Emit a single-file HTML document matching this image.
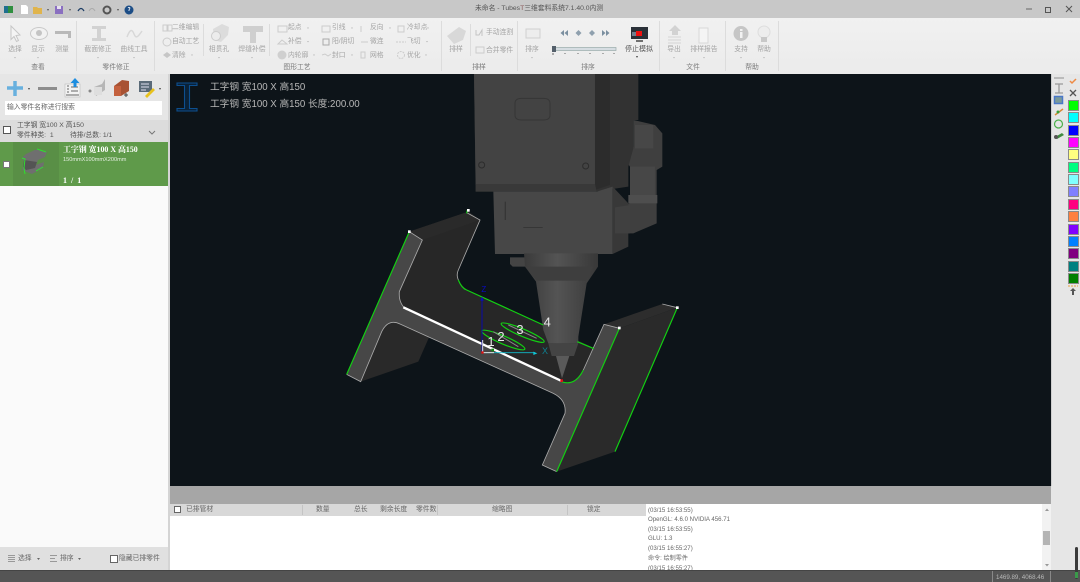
<!DOCTYPE html>
<html><head><meta charset="utf-8">
<style>
html,body{margin:0;padding:0;width:1080px;height:582px;overflow:hidden;background:#ececec}
body{position:relative;font-family:"Liberation Sans","Noto Sans CJK SC",sans-serif;font-size:6.800px;color:#444}
div,span,svg{position:absolute}
svg{overflow:visible;left:0;top:0}
.t{white-space:nowrap;line-height:10px;filter:blur(.25px)}
.c{transform:translateX(-50%)}
.g{color:#a4a4a4}
.l{color:#7c7c7c}
.k{color:#666}
.sep{width:1px;background:#dcdcdc;top:21px;height:50px}
.sw{left:1068px;width:9px;height:9px;border:1px solid #8a8a8a}
</style></head>
<body>
<!-- title bar -->
<div style="left:0;top:0;width:1080px;height:18px;background:#c8c8c8"></div>
<div style="left:0;top:18px;width:1080px;height:56px;background:linear-gradient(#f1f1f1,#ebebeb)"></div>
<span class="t" style="left:475px;top:4px;color:#555">未命名 - Tubes<span style="position:static;color:#8a5a5a">T</span>三维套料系统7.1.40.0内测</span>

<svg width="1080" height="74">
 <!-- qat -->
 <rect x="4" y="6" width="5" height="7" fill="#1f6f8f"/><rect x="8" y="6" width="5" height="7" fill="#2f8f3f"/>
 <path d="M21 5h5l2 2v7h-7z" fill="#fff"/>
 <path d="M33 7h4l1 1h4v6h-9z" fill="#e0b44c"/>
 <path d="M47 9l2 0-1 2z" fill="#555"/>
 <rect x="55" y="6" width="8" height="8" fill="#8a6fc0"/><rect x="57" y="6" width="4" height="3" fill="#e6e0f0"/>
 <path d="M69 9l2 0-1 2z" fill="#555"/>
 <path d="M78 11q3-5 6 0" fill="none" stroke="#1f3f66" stroke-width="1.300"/>
 <path d="M89 11q3-5 6 0" fill="none" stroke="#aaa" stroke-width="1"/>
 <circle cx="107" cy="10" r="3.500" fill="none" stroke="#555" stroke-width="2"/>
 <path d="M117 9l2 0-1 2z" fill="#555"/>
 <circle cx="129" cy="10" r="4.500" fill="#1c4d86"/>
 <path d="M128 8q1-1.500 2 0l-1 2v1" fill="none" stroke="#fff" stroke-width=".8"/>
 <!-- window buttons -->
 <path d="M1026 9h6" stroke="#666"/>
 <rect x="1045.500" y="7.500" width="5" height="5" fill="none" stroke="#555"/>
 <path d="M1066 6l6 6m0-6l-6 6" stroke="#555"/>
 <!-- ribbon icons -->
 <g>
 <path d="M11 26l9 9-4 .5 2.500 5-2 1-2.500-5-3 3z" fill="#f4f4f4" stroke="#c6c6c6"/>
 <ellipse cx="39" cy="33.500" rx="8.500" ry="6" fill="#f2f2f2" stroke="#c9c9c9"/><circle cx="39" cy="33" r="3" fill="#c4c4c4"/>
 <path d="M55 31h16v7h-3v-4h-13z" fill="#b9b9b9"/>
 <path d="M92 26h14v3h-5v9h5v3h-14v-3h5v-9h-5z" fill="#d2d2d2"/>
 <path d="M127 37c3-8 5-8 7-3s4 3 8-3" fill="none" stroke="#d8d8d8" stroke-width="1.500"/>
 <path d="M213 29l9-5 7 3-1 8-7 7-7-2z" fill="#dcdcdc"/>
 <circle cx="216" cy="36" r="4.500" fill="#ececec" stroke="#ccc"/>
 <path d="M243 26h20v6h-7v11h-6v-11h-7z" fill="#cfcfcf"/>
 <rect x="163" y="25" width="4" height="6" fill="none" stroke="#ccc"/><rect x="168" y="25" width="4" height="6" fill="none" stroke="#ccc"/>
 <circle cx="167" cy="42" r="4" fill="none" stroke="#ccc"/>
 <path d="M163 55l4-3 4 3-4 3z" fill="#c6c6c6"/>
 <rect x="278" y="26" width="9" height="6" fill="none" stroke="#ccc"/>
 <path d="M278 44l4-4 5 4z" fill="none" stroke="#ccc"/>
 <circle cx="282" cy="55" r="4.500" fill="#cfcfcf"/>
 <rect x="322" y="26" width="8" height="6" fill="none" stroke="#ccc"/>
 <rect x="323" y="39" width="6" height="6" fill="none" stroke="#aaa"/>
 <path d="M322 55l3-1 3 2 3-2" fill="none" stroke="#ccc"/>
 <path d="M361 26v6M361 42h7M361 52h4v6h-4z" fill="none" stroke="#ccc"/>
 <rect x="398" y="26" width="6" height="6" fill="none" stroke="#ccc"/>
 <path d="M396 42h10" stroke="#ccc" stroke-dasharray="2 1"/>
 <circle cx="401" cy="55" r="3.500" fill="none" stroke="#ccc" stroke-dasharray="2 1"/>
 <path d="M447 36l12-9 7 4-3 9-9 4z" fill="#d8d8d8"/>
 <path d="M476 30v5h3l3-5v6" fill="none" stroke="#c4c4c4"/>
 <rect x="476" y="47" width="8" height="6" fill="none" stroke="#ccc"/>
 <rect x="526" y="29" width="14" height="9" fill="#ededed" stroke="#d0d0d0"/>
 <!-- dropdown arrows -->
 <g fill="#bbb">
 <path d="M14 57h2l-1 1.500zM37 57h2l-1 1.500zM97 57h2l-1 1.500zM133 57h2l-1 1.500zM218 57h2l-1 1.500zM251 57h2l-1 1.500zM531 57h2l-1 1.500zM673 57h2l-1 1.500zM703 57h2l-1 1.500zM740 57h2l-1 1.500zM763 57h2l-1 1.500z"/>
 <path d="M191 54.500h2l-1 1.500zM307 27.500h2l-1 1.500zM307 41h2l-1 1.500zM313 54.500h2l-1 1.500zM351 27.500h2l-1 1.500zM351 54.500h2l-1 1.500zM389 27.500h2l-1 1.500zM427 27.500h2l-1 1.500zM426 41h2l-1 1.500zM425 54.500h2l-1 1.500z"/>
 </g>
 <!-- transport -->
 <path d="M564 30l-3.500 3 3.500 3zM568 30l-3.500 3 3.500 3z" fill="#7b8fa0"/>
 <path d="M578.500 30l3 3-3 3-3-3z" fill="#8fa0ae"/><path d="M592 30l3 3-3 3-3-3z" fill="#8fa0ae"/>
 <path d="M602 30l3.500 3-3.500 3zM606 30l3.500 3-3.500 3z" fill="#7b8fa0"/>
 <rect x="553" y="47.500" width="63" height="3" fill="#d6dde2" stroke="#99aaaa"  stroke-width=".7"/>
 <rect x="552" y="46" width="4" height="6" fill="#54606b"/>
 <path d="M553 53v2M565 53v1M578 53v1M590 53v1M603 53v1M614 53v1" stroke="#666"/>
 <rect x="631" y="27" width="17" height="12" fill="#2a3038"/><rect x="636" y="31" width="6" height="5" fill="#ee1010"/>
 <rect x="632" y="32" width="4" height="4" fill="#6f7f90"/>
 <path d="M636 41h7" stroke="#444" stroke-width="1.500"/>
 <path d="M636 56l2 0-1 2z" fill="#444"/>
 <path d="M675 25l6 6h-3v4h-6v-4h-3z" fill="#d2d2d2"/><path d="M668 37h13M668 40h13M668 43h13" stroke="#d4d4d4"/>
 <path d="M699 28h9v15h-9z" fill="#f4f4f4" stroke="#d8d8d8"/>
 <circle cx="741" cy="33.500" r="7.500" fill="#c6c6c6"/><rect x="740" y="32" width="2.500" height="6" fill="#f2f2f2"/><rect x="740" y="29" width="2.500" height="2" fill="#f2f2f2"/>
 <circle cx="764" cy="32" r="6" fill="#ededed" stroke="#ddd"/><rect x="761" y="37" width="6" height="5" fill="#c8c8c8"/>
 </g>
</svg>
<div class="sep" style="left:76px"></div><div class="sep" style="left:154px"></div>
<div class="sep" style="left:441px"></div><div class="sep" style="left:517px"></div>
<div class="sep" style="left:659px"></div><div class="sep" style="left:725px"></div><div class="sep" style="left:778px"></div>
<div class="sep" style="left:203px;top:24px;height:32px"></div>
<div class="sep" style="left:269px;top:24px;height:32px"></div>
<div class="sep" style="left:470px;top:24px;height:32px"></div>

<span class="t c g" style="left:15px;top:45px">选择</span><span class="t c g" style="left:38px;top:45px">显示</span><span class="t c g" style="left:62px;top:45px">测量</span>
<span class="t c g" style="left:98px;top:45px">截面修正</span><span class="t c g" style="left:134px;top:45px">曲线工具</span>
<span class="t g" style="left:172px;top:23px">二维编辑</span><span class="t g" style="left:172px;top:37px">自动工艺</span><span class="t g" style="left:172px;top:51px">清除</span>
<span class="t c g" style="left:219px;top:45px">相贯孔</span><span class="t c g" style="left:252px;top:45px">焊缝补偿</span>
<span class="t g" style="left:288px;top:23px">起点</span><span class="t g" style="left:288px;top:37px">补偿</span><span class="t g" style="left:288px;top:51px">内轮廓</span>
<span class="t g" style="left:332px;top:23px">引线</span><span class="t g" style="left:332px;top:37px">阳/阴切</span><span class="t g" style="left:332px;top:51px">封口</span>
<span class="t g" style="left:370px;top:23px">反向</span><span class="t g" style="left:370px;top:37px">微连</span><span class="t g" style="left:370px;top:51px">网格</span>
<span class="t g" style="left:407px;top:23px">冷却点</span><span class="t g" style="left:407px;top:37px">飞切</span><span class="t g" style="left:407px;top:51px">优化</span>
<span class="t c g" style="left:456px;top:45px">排样</span>
<span class="t g" style="left:486px;top:28px">手动连割</span><span class="t g" style="left:486px;top:46px">合并零件</span>
<span class="t c g" style="left:532px;top:45px">排序</span>
<span class="t c" style="left:639px;top:45px;color:#555;font-size:7px">停止模拟</span>
<span class="t c g" style="left:674px;top:45px">导出</span><span class="t c g" style="left:704px;top:45px">排样报告</span>
<span class="t c g" style="left:741px;top:45px">支持</span><span class="t c g" style="left:764px;top:45px">帮助</span>
<span class="t c l" style="left:38px;top:63px">查看</span><span class="t c l" style="left:116px;top:63px">零件修正</span><span class="t c l" style="left:297px;top:63px">图形工艺</span>
<span class="t c l" style="left:479px;top:63px">排样</span><span class="t c l" style="left:588px;top:63px">排序</span><span class="t c l" style="left:693px;top:63px">文件</span><span class="t c l" style="left:752px;top:63px">帮助</span>

<!-- left panel -->
<div style="left:0;top:74px;width:168px;height:46px;background:#e6e6e6"></div>
<div style="left:5px;top:101px;width:157px;height:14px;background:#fff"></div>
<span class="t k" style="left:7px;top:103px">输入零件名称进行搜索</span>
<div style="left:0;top:120px;width:168px;height:22px;background:#dcdcdc"></div>
<div style="left:3px;top:126px;width:6px;height:6px;border:1px solid #555;background:#fff"></div>
<span class="t" style="left:17px;top:121px;color:#555">工字钢 宽100 X 高150</span>
<span class="t" style="left:17px;top:131px;color:#555">零件种类:&nbsp; 1</span>
<span class="t" style="left:70px;top:131px;color:#555">待排/总数: 1/1</span>
<div style="left:0;top:142px;width:168px;height:44px;background:#5f9a4a"></div>
<div style="left:13px;top:142px;width:46px;height:44px;background:#598f46"></div>
<div style="left:0;top:186px;width:168px;height:361px;background:#fafafa"></div>
<div style="left:3px;top:161px;width:5px;height:5px;border:1px solid #777;background:#fff"></div>
<span class="t" style="left:63px;top:145px;color:#fff;font-family:'Liberation Serif','Noto Serif CJK SC',serif;font-weight:bold;font-size:7.900px">工字钢 宽100 X 高150</span>
<span class="t" style="left:63px;top:155px;color:#e4efe0;font-size:5.600px">150mmX100mmX200mm</span>
<span class="t" style="left:63px;top:176px;color:#fff;font-family:'Liberation Serif',serif;font-weight:bold;font-size:8px;letter-spacing:1px">1 / 1</span>
<div style="left:0;top:547px;width:168px;height:23px;background:#e0e0e0"></div>
<span class="t k" style="left:18px;top:554px">选择</span><span class="t k" style="left:60px;top:554px">排序</span>
<div style="left:110px;top:555px;width:6px;height:6px;border:1px solid #666;background:#fff"></div>
<span class="t k" style="left:119px;top:554px">隐藏已排零件</span>

<svg width="170" height="582">
 <path d="M8 555.500h7M8 557.500h7M8 559.500h7M8 561.500h7" stroke="#999"/>
 <path d="M37 558h3l-1.500 2zM78 558h3l-1.500 2z" fill="#666"/>
 <path d="M50 555.500h7M50 558.500h5M50 561.500h7" stroke="#999"/>
 <path d="M15 81v15M7 88h16" stroke="#68b0de" stroke-width="3.500"/>
 <path d="M28 88l2 0-1 2z" fill="#444"/>
 <rect x="38" y="87" width="19" height="3" fill="#8d8d8d"/>
 <rect x="65" y="84" width="15" height="13" fill="#f2f2f2" stroke="#bbb" stroke-width=".6"/>
 <path d="M67 86h2M67 89h2M67 92h2M71 87h7M71 91h7M66 95h13" stroke="#666"/>
 <path d="M75 78l4.500 5h-3v4h-3v-4h-3z" fill="#1e8ee0"/>
 <path d="M94 87l8-3 3-5v11l-9 6z" fill="#b6b6b6"/><rect x="94" y="87" width="8" height="8" fill="#dedede"/>
 <circle cx="90" cy="91" r="1.500" fill="#888"/>
 <path d="M114 86l8-6 7 1v10l-8 5h-7z" fill="#a85233"/>
 <path d="M114 86h7v10h-7z" fill="#c4613e"/>
 <path d="M126 93v4m-2-2h4" stroke="#444"/>
 <rect x="139" y="81" width="13" height="11" fill="#5a6a78"/><path d="M141 84h8M141 87h8M141 90h5" stroke="#dde"/>
 <path d="M145 96l8-8 2 2-8 8z" fill="#e8c21e"/>
 <path d="M159 88l2 0-1 2z" fill="#444"/>
 <path d="M149 131l3 3 3-3" fill="none" stroke="#777"/>
 <!-- thumbnail -->
 <path d="M26 154l11-5 10 3-2 5-7 3-2 5 8-3-1 6-11 6-10-4 2-8-2-4z" fill="#6f6f6f"/>
 <path d="M24 160l13 2-2 6-9 2-3-3z" fill="#545454"/>
 <path d="M22 158l3 1-1 9 1 6M37 149l9 3M36 171l7-4" fill="none" stroke="#2fe02f" stroke-width="1"/>
</svg>
<div style="left:168px;top:74px;width:2px;height:496px;background:#d4d4d4"></div>

<!-- viewport -->
<div style="left:170px;top:74px;width:881px;height:412px;background:#0d1419"></div>
<svg width="1080" height="582">
 <defs>
  <linearGradient id="cone" x1="0" x2="1"><stop offset="0" stop-color="#3a3a3a"/><stop offset=".45" stop-color="#545454"/><stop offset="1" stop-color="#383838"/></linearGradient>
 </defs>
 <!-- I icon -->
 <path d="M177 83h20v2.500h-7.500v23h7.500v2.500h-20v-2.500h7.500v-23h-7.500z" fill="#0a2238" stroke="#0d4f8f" stroke-width="1.100"/>

 <!-- I beam (zoom coords) -->
 <g transform="translate(340 200) scale(.33333)">
  <path d="M208 95L385 35L420 60L355 210Q348 245 380 268L765 445L730 510Q705 560 665 545L200 330Q175 310 178 275L247 120Z" fill="#272727"/>
  <path d="M208 95L385 35L420 60L247 120Z" fill="#2a2a2a"/>
  <path d="M62 545L235 485L268 410L170 368Q140 365 125 395Z" fill="#292929"/>
  <path d="M792 373L967 312L1012 323L838 385Z" fill="#2d2d2d"/>
  <path d="M838 385L1012 323L825 755L650 815Z" fill="#2a2a2a"/>
 </g>

 <!-- head -->
 <g transform="translate(460 70) scale(.33333)">
  <path d="M520 150L585 165L607 190V290L590 300L590 460L520 490L465 490V410L510 400V290L495 270L510 245L520 230Z" fill="#3f3f3f"/>
  <path d="M510 290H585V375H510Z" fill="#474747"/>
  <path d="M505 375H592V400H505Z" fill="#4e4e4e"/>
  <path d="M525 165H580V235H525Z" fill="#474747"/>
  <path d="M42 12H535V150L520 150V235L505 290V350L405 365L47 365Z" fill="#323232"/>
  <path d="M405 12H450V345L405 360Z" fill="#2c2c2c"/>
  <path d="M42 12H405V345H47Z" fill="#434343"/>
  <path d="M47 342H405L410 365H47Z" fill="#393939"/>
  <path d="M165 100Q165 85 185 85H250Q270 85 270 100V135Q270 150 250 150H185Q165 150 165 135Z" fill="none" stroke="#363636" stroke-width="3"/>
  <circle cx="65" cy="285" r="9" fill="none" stroke="#2c2c2c" stroke-width="3"/>
  <circle cx="377" cy="288" r="9" fill="none" stroke="#2c2c2c" stroke-width="3"/>
  <path d="M100 365H410L458 350V552H105Z" fill="#474747"/>
  <path d="M458 350L505 400V530L458 552Z" fill="#383838"/>
  <path d="M465 412L510 405V490L465 490Z" fill="#404040"/>
  <path d="M190 472H248" stroke="#2c2c2c" stroke-width="2"/>
  <path d="M136 395V450" stroke="#363636" stroke-width="4"/>
  <path d="M150 562H195V590H158L150 582Z" fill="#444"/>
  <path d="M192 550H414V590L380 640L355 800V820H265L250 780L228 635L195 590Z" fill="url(#cone)"/>
  <path d="M195 590H400L378 632H230Z" fill="#3e3e3e"/>
  <path d="M265 820H355L342 858H275Z" fill="#444"/>
  <path d="M288 858H328L306 925Z" fill="#5a5a5a"/>
 </g>

 <g transform="translate(340 200) scale(.33333)">
  <path d="M208 95L247 120L178 275Q175 310 200 330L665 545Q705 560 730 510L792 373L838 385L650 815L607 795L675 640Q680 600 640 580L180 372Q145 355 125 395L62 545L20 523Z" fill="#474747"/>
  <path d="M208 95L247 120L178 275Q175 310 200 330M730 510L792 373L838 385M650 815L607 795L675 640Q680 600 640 580L180 372Q145 355 125 395L62 545L20 523M380 38L420 60L355 210Q348 225 355 240M967 312L1012 323" fill="none" stroke="#aaa" stroke-width="2.500"/>
  <g fill="none" stroke="#12d012" stroke-width="3.500">
   <path d="M208 95L20 523M838 385L650 815M1012 323L825 755M355 240Q365 265 380 270L610 375M712 425L762 446M665 545Q705 560 730 510M382 30L380 40"/>
   <ellipse cx="490" cy="420" rx="70" ry="12" transform="rotate(23 490 420)"/>
   <ellipse cx="548" cy="398" rx="70" ry="11" transform="rotate(23 548 398)"/>
  </g>
  <path d="M505 375L590 415M460 395L535 440" stroke="#888" stroke-width="3"/>
  <path d="M190 322L665 543" stroke="#fff" stroke-width="7" fill="none"/>
  <path d="M426 295V455" stroke="#0a0aa8" stroke-width="3"/>
  <path d="M426 290l-5 12h10z" fill="#0a0ac8"/>
  <path d="M428 458H585" stroke="#10b8c8" stroke-width="2.500"/>
  <path d="M592 460l-12-5v10z" fill="#10c8d8"/>
  <path d="M428 458H462M428 420V458" stroke="#ddd" stroke-width="3"/>
  <rect x="424" y="454" width="7" height="7" fill="#e01010"/>
  <rect x="661" y="538" width="8" height="8" fill="#e01010"/>
  <rect x="454" y="446" width="8" height="8" fill="#128a12"/>
  <rect x="204" y="91" width="8" height="8" fill="#fff"/>
  <rect x="381" y="27" width="8" height="8" fill="#fff"/>
  <rect x="834" y="380" width="8" height="8" fill="#fff"/>
  <rect x="1008" y="319" width="8" height="8" fill="#fff"/>
  <text x="424" y="276" font-family="Liberation Sans" font-size="24" fill="#0a0ac0">Z</text>
  <text x="606" y="462" font-family="Liberation Sans" font-size="27" fill="#0f7f90">X</text>
  <text x="442" y="438" font-family="Liberation Sans" font-size="39" fill="#e8e8e8">1</text>
  <text x="472" y="423" font-family="Liberation Sans" font-size="39" fill="#e8e8e8">2</text>
  <text x="529" y="402" font-family="Liberation Sans" font-size="39" fill="#e8e8e8">3</text>
  <text x="611" y="379" font-family="Liberation Sans" font-size="39" fill="#e8e8e8">4</text>
 </g>
</svg>
<span class="t" style="left:210px;top:83px;color:#b8b8b8;font-size:9.700px">工字钢 宽100 X 高150</span>
<span class="t" style="left:210px;top:100px;color:#b8b8b8;font-size:9.700px">工字钢 宽100 X 高150 长度:200.00</span>

<!-- bottom -->
<div style="left:170px;top:486px;width:881px;height:18px;background:#a6a6a6"></div>
<div style="left:170px;top:504px;width:476px;height:12px;background:#d8d8d8"></div>
<div style="left:170px;top:516px;width:476px;height:54px;background:#fff"></div>
<div style="left:174px;top:506px;width:5px;height:5px;border:1px solid #666;background:#fff"></div>
<span class="t k" style="left:186px;top:505px">已排管材</span>
<span class="t k" style="left:316px;top:505px">数量</span><span class="t k" style="left:354px;top:505px">总长</span>
<span class="t k" style="left:380px;top:505px">剩余长度</span><span class="t k" style="left:416px;top:505px">零件数</span>
<span class="t k" style="left:492px;top:505px">缩略图</span><span class="t k" style="left:587px;top:505px">锁定</span>
<div style="left:302px;top:505px;width:1px;height:10px;background:#c4c4c4"></div>
<div style="left:437px;top:505px;width:1px;height:10px;background:#c4c4c4"></div>
<div style="left:567px;top:505px;width:1px;height:10px;background:#c4c4c4"></div>

<div style="left:646px;top:504px;width:405px;height:66px;background:#fff;overflow:hidden">
 <span class="t k" style="left:2px;top:2px;font-size:6.100px">(03/15 16:53:55)</span>
 <span class="t k" style="left:2px;top:11px;font-size:6.100px">OpenGL: 4.6.0 NVIDIA 456.71</span>
 <span class="t k" style="left:2px;top:21px;font-size:6.100px">(03/15 16:53:55)</span>
 <span class="t k" style="left:2px;top:30px;font-size:6.100px">GLU: 1.3</span>
 <span class="t k" style="left:2px;top:40px;font-size:6.100px">(03/15 16:55:27)</span>
 <span class="t k" style="left:2px;top:50px;font-size:6.100px">命令: 绘制零件</span>
 <span class="t k" style="left:2px;top:60px;font-size:6.100px">(03/15 16:55:27)</span>
</div>
<div style="left:1042px;top:504px;width:9px;height:66px;background:#f2f2f2"></div>
<div style="left:1043px;top:531px;width:7px;height:14px;background:#b4b4b4"></div>
<svg width="1080" height="582"><path d="M1045 511l2-2.500 2 2.500zM1045 564l2 2.500 2-2.500z" fill="#999"/></svg>

<!-- right strip -->
<div style="left:1051px;top:74px;width:29px;height:496px;background:#e6e6e6"></div>
<div style="left:1051px;top:74px;width:1px;height:412px;background:#cfcfcf"></div>
<svg width="1080" height="582">
 <path d="M1054 78h10" stroke="#bbb" stroke-width="2"/>
 <path d="M1055 84h8M1055 93h8M1059 84v9" stroke="#999" stroke-width="1.300"/>
 <rect x="1054.500" y="96.500" width="8" height="7" fill="#7a9a9a" stroke="#4a78c8" stroke-width="1.500"/>
 <path d="M1055 115l8-6" stroke="#d88a3a" stroke-width="1.500"/><circle cx="1058" cy="112" r="1.500" fill="#3aa03a"/>
 <circle cx="1058.500" cy="124" r="4" fill="none" stroke="#4ab04a" stroke-width="1.200"/>
 <path d="M1055 137l7-4 2 2-7 4z" fill="#3f8a3f"/><circle cx="1056" cy="137" r="2" fill="#555"/>
 <path d="M1070 81l2 2 4-4" fill="none" stroke="#ee8a44" stroke-width="1.500"/>
 <path d="M1070 90l6 6m0-6l-6 6" stroke="#555" stroke-width="1.300"/>
 <path d="M1068 286h10" stroke="#e8a040" stroke-dasharray="2 1"/>
 <path d="M1073 288l3 3h-2v4h-2v-4h-2z" fill="#555"/>
</svg>
<div class="sw" style="top:100px;background:#00ff00"></div>
<div class="sw" style="top:112px;background:#00ffff"></div>
<div class="sw" style="top:125px;background:#0000ff"></div>
<div class="sw" style="top:137px;background:#ff00ff"></div>
<div class="sw" style="top:149px;background:#ffff80"></div>
<div class="sw" style="top:162px;background:#00ff80"></div>
<div class="sw" style="top:174px;background:#80ffff"></div>
<div class="sw" style="top:186px;background:#8080ff"></div>
<div class="sw" style="top:199px;background:#ff0080"></div>
<div class="sw" style="top:211px;background:#ff8040"></div>
<div class="sw" style="top:224px;background:#8000ff"></div>
<div class="sw" style="top:236px;background:#0080ff"></div>
<div class="sw" style="top:248px;background:#800080"></div>
<div class="sw" style="top:261px;background:#008080"></div>
<div class="sw" style="top:273px;background:#008000"></div>

<!-- status bar -->
<div style="left:0;top:570px;width:1080px;height:12px;background:#555;border-top:1px solid #444;box-sizing:border-box"></div>
<div style="left:992px;top:571px;width:1px;height:11px;background:#888"></div>
<div style="left:1050px;top:571px;width:1px;height:11px;background:#888"></div>
<span class="t" style="left:996px;top:573px;color:#b8b8b8;font-size:6.200px">1469.89, 4068.46</span>
<div style="left:1075px;top:547px;width:3px;height:32px;background:#3a3a3a;border-radius:2px"></div>
<div style="left:1075px;top:572px;width:3px;height:6px;background:#3a9a4a"></div>
</body></html>
